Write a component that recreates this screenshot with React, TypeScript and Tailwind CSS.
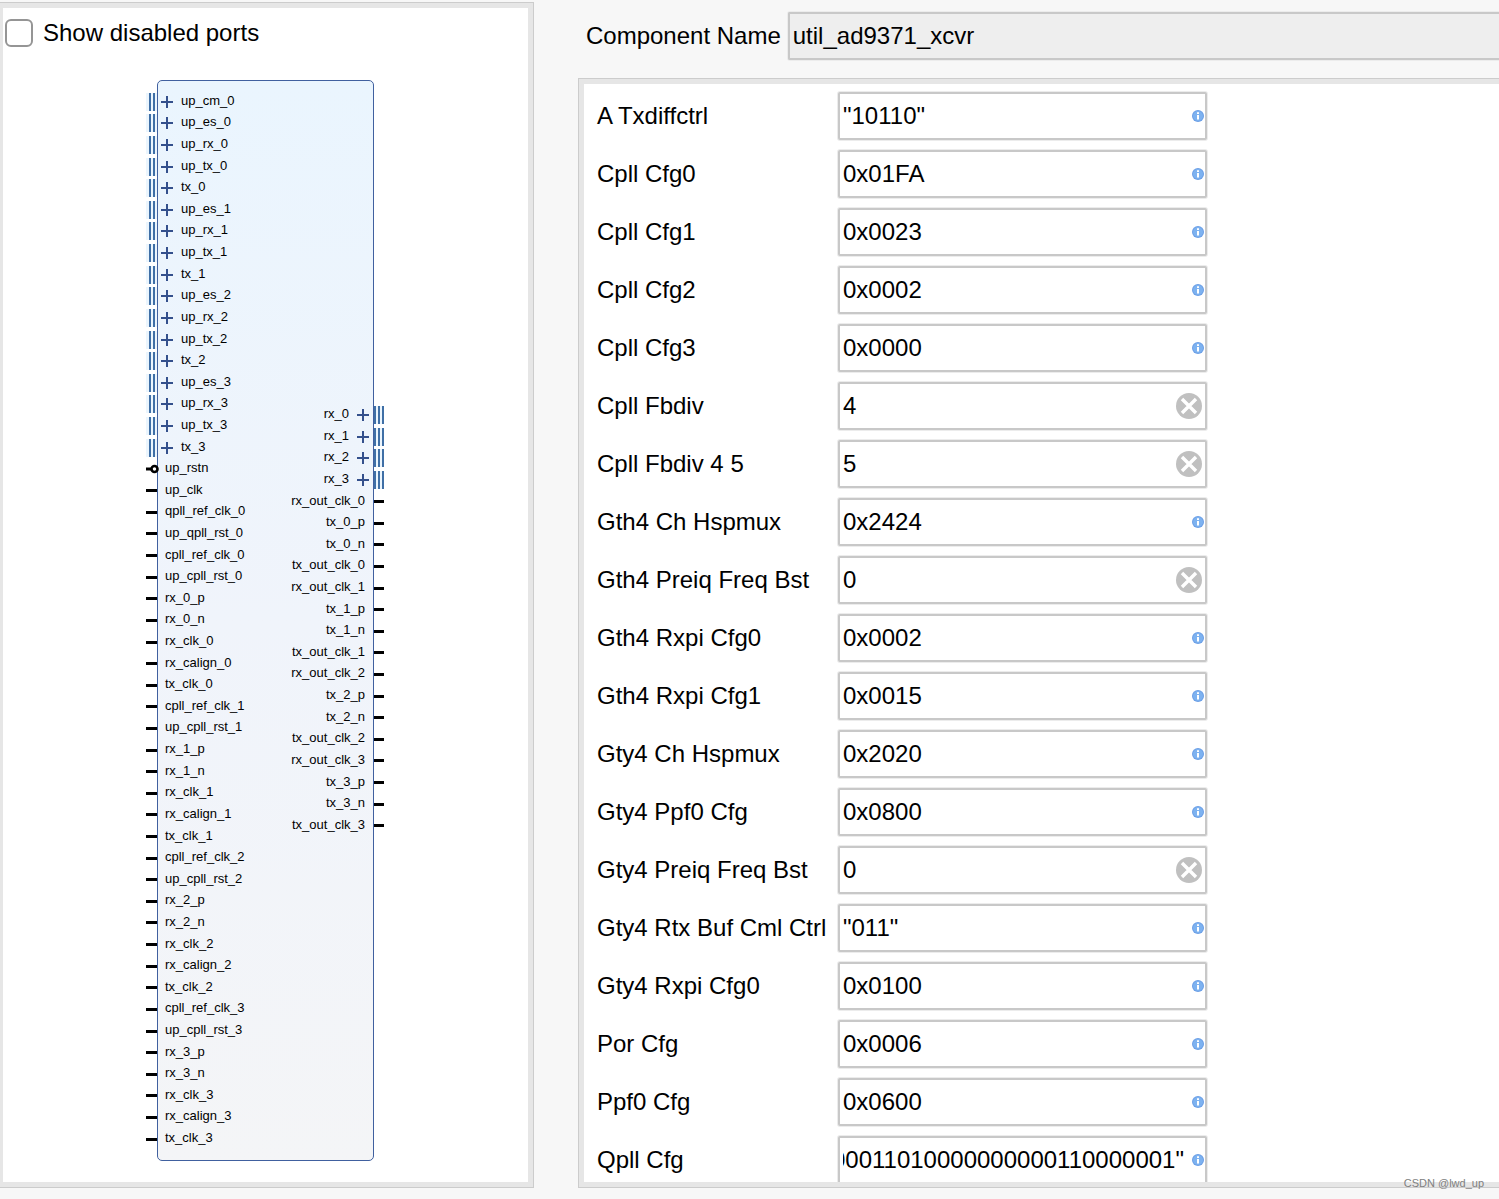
import { useEffect, useRef } from "react";

const busLeft = [
  "up_cm_0", "up_es_0", "up_rx_0", "up_tx_0", "tx_0",
  "up_es_1", "up_rx_1", "up_tx_1", "tx_1",
  "up_es_2", "up_rx_2", "up_tx_2", "tx_2",
  "up_es_3", "up_rx_3", "up_tx_3", "tx_3",
];

const pinLeft = [
  "up_rstn", "up_clk", "qpll_ref_clk_0", "up_qpll_rst_0",
  "cpll_ref_clk_0", "up_cpll_rst_0", "rx_0_p", "rx_0_n", "rx_clk_0", "rx_calign_0", "tx_clk_0",
  "cpll_ref_clk_1", "up_cpll_rst_1", "rx_1_p", "rx_1_n", "rx_clk_1", "rx_calign_1", "tx_clk_1",
  "cpll_ref_clk_2", "up_cpll_rst_2", "rx_2_p", "rx_2_n", "rx_clk_2", "rx_calign_2", "tx_clk_2",
  "cpll_ref_clk_3", "up_cpll_rst_3", "rx_3_p", "rx_3_n", "rx_clk_3", "rx_calign_3", "tx_clk_3",
];

const busRight = ["rx_0", "rx_1", "rx_2", "rx_3"];

const pinRight = [
  "rx_out_clk_0", "tx_0_p", "tx_0_n", "tx_out_clk_0",
  "rx_out_clk_1", "tx_1_p", "tx_1_n", "tx_out_clk_1",
  "rx_out_clk_2", "tx_2_p", "tx_2_n", "tx_out_clk_2",
  "rx_out_clk_3", "tx_3_p", "tx_3_n", "tx_out_clk_3",
];

type Param = { label: string; value: string; clear?: boolean };

const params: Param[] = [
  { label: "A Txdiffctrl", value: '"10110"' },
  { label: "Cpll Cfg0", value: "0x01FA" },
  { label: "Cpll Cfg1", value: "0x0023" },
  { label: "Cpll Cfg2", value: "0x0002" },
  { label: "Cpll Cfg3", value: "0x0000" },
  { label: "Cpll Fbdiv", value: "4", clear: true },
  { label: "Cpll Fbdiv 4 5", value: "5", clear: true },
  { label: "Gth4 Ch Hspmux", value: "0x2424" },
  { label: "Gth4 Preiq Freq Bst", value: "0", clear: true },
  { label: "Gth4 Rxpi Cfg0", value: "0x0002" },
  { label: "Gth4 Rxpi Cfg1", value: "0x0015" },
  { label: "Gty4 Ch Hspmux", value: "0x2020" },
  { label: "Gty4 Ppf0 Cfg", value: "0x0800" },
  { label: "Gty4 Preiq Freq Bst", value: "0", clear: true },
  { label: "Gty4 Rtx Buf Cml Ctrl", value: '"011"' },
  { label: "Gty4 Rxpi Cfg0", value: "0x0100" },
  { label: "Por Cfg", value: "0x0006" },
  { label: "Ppf0 Cfg", value: "0x0600" },
  { label: "Qpll Cfg", value: '"000000000011010000000000110000001"' },
];

function Plus() {
  return (
    <svg className="size-3 shrink-0" viewBox="0 0 12 12" aria-hidden="true">
      <path d="M0 6H12M6 0V12" stroke="#34508c" strokeWidth="2" />
    </svg>
  );
}

function BusPinLeft() {
  return (
    <svg className="h-[18px] w-[11px]" viewBox="0 0 11 18" aria-hidden="true">
      <rect width="11" height="18" fill="#ebf5fd" />
      <path d="M4 0V18M8 0V18" stroke="#3f6fa6" strokeWidth="2" />
    </svg>
  );
}

function BusPinRight() {
  return (
    <svg className="h-[18px] w-[10px]" viewBox="0 0 10 18" aria-hidden="true">
      <rect width="10" height="18" fill="#ebf5fd" />
      <path d="M1 0V18M5 0V18M9 0V18" stroke="#3f6fa6" strokeWidth="2" />
    </svg>
  );
}

function InvertedPin() {
  return (
    <svg className="h-[10px] w-[11px] overflow-visible" viewBox="0 0 11 10" aria-hidden="true">
      <path d="M0 5H5" stroke="#000" strokeWidth="3" />
      <circle cx="8.5" cy="5" r="3" fill="#fff" stroke="#000" strokeWidth="2.6" />
    </svg>
  );
}

function BlockSymbol() {
  return (
    <div className="flex flex-1 justify-center pr-px text-[13px] leading-4 text-black">
      <div className="relative z-10 flex w-[11px] flex-col py-[11px]">
        {busLeft.map((n) => (
          <div key={n} className="flex flex-1 items-center"><BusPinLeft /></div>
        ))}
        {pinLeft.map((n) => (
          <div key={n} className="flex flex-1 items-center">
            {n === "up_rstn" ? <InvertedPin /> : <div className="h-[3px] w-full bg-black" />}
          </div>
        ))}
      </div>
      <div className="flex w-[217px] justify-between rounded-[5px] border border-[#40609f] bg-linear-to-b from-[#eaf5fe] via-[#f0f4fb] to-[#f4f5f7] py-[10px]">
        <ul className="flex flex-col">
          {busLeft.map((n) => (
            <li key={n} className="flex flex-1 items-center gap-2 pl-[3px]">
              <Plus />
              <span className="-mt-0.5">{n}</span>
            </li>
          ))}
          {pinLeft.map((n) => (
            <li key={n} className="flex flex-1 items-center pl-[7px]">
              <span className="-mt-0.5">{n}</span>
            </li>
          ))}
        </ul>
        <ul className="flex flex-col">
          <li className="flex-[29]" aria-hidden="true" />
          {busRight.map((n) => (
            <li key={n} className="flex flex-[2] items-center justify-end gap-2 pr-1">
              <span className="-mt-0.5">{n}</span>
              <Plus />
            </li>
          ))}
          {pinRight.map((n) => (
            <li key={n} className="flex flex-[2] items-center justify-end pr-2">
              <span className="-mt-0.5">{n}</span>
            </li>
          ))}
          <li className="flex-[29]" aria-hidden="true" />
        </ul>
      </div>
      <div className="flex w-[10px] flex-col py-[11px]">
        <div className="flex-[29]" />
        {busRight.map((n) => (
          <div key={n} className="flex flex-[2] items-center"><BusPinRight /></div>
        ))}
        {pinRight.map((n) => (
          <div key={n} className="flex flex-[2] items-center"><div className="h-[3px] w-full bg-black" /></div>
        ))}
        <div className="flex-[29]" />
      </div>
    </div>
  );
}

function InfoIcon() {
  return (
    <svg className="size-3 shrink-0" viewBox="0 0 12 12" aria-hidden="true">
      <circle cx="6" cy="6" r="6" fill="#6b9fe6" />
      <circle cx="6" cy="6" r="5" fill="#7db2f0" />
      <path d="M5 5H7V9.5H5Z M5 2.3H7V4H5Z" fill="#fff" />
    </svg>
  );
}

function ClearIcon() {
  return (
    <svg className="size-[26px]" viewBox="0 0 26 26" aria-hidden="true">
      <circle cx="13" cy="13" r="13" fill="#c0c0c0" />
      <path d="M6 6L20 20M20 6L6 20" stroke="#fff" strokeWidth="3.4" />
    </svg>
  );
}

function ParamRow({ label, value, clear }: Param) {
  const ref = useRef<HTMLInputElement>(null);
  const id = label.toLowerCase().replace(/ /g, "-");

  useEffect(() => {
    if (ref.current) ref.current.scrollLeft = ref.current.scrollWidth;
  }, []);

  return (
    <div className="flex items-center">
      <label htmlFor={id} className="w-60 shrink-0 whitespace-nowrap">{label}</label>
      <div className="m-px flex h-12 w-[369px] items-center rounded-[2px] border-2 border-[#c8c8c8] bg-white pl-[3px] ring-1 ring-[#ececec]">
        <input ref={ref} id={id} defaultValue={value} className="min-w-0 flex-1 bg-transparent outline-none" />
        {clear ? (
          <button type="button" aria-label={`Clear ${label}`} className="mr-[3px] ml-2"><ClearIcon /></button>
        ) : (
          <span className="mr-[1px] ml-2"><InfoIcon /></span>
        )}
      </div>
    </div>
  );
}

export default function App() {
  return (
    <div className="relative grid h-screen grid-cols-[534fr_965fr] gap-0 overflow-hidden bg-[#f7f7f7] pt-[2px] pb-[11px] font-['Liberation_Sans',Arial,sans-serif] text-2xl leading-7 text-black">
      <section className="flex min-w-0 border-y border-r border-[#cccccc]">
        <div className="flex flex-1 flex-col border-y-[5px] border-r-[5px] border-l-[3px] border-[#e6e6e6] bg-white pb-[21px]">
          <label className="mt-[11px] mb-[33px] flex items-center gap-[10px] pl-[2px]">
            <input type="checkbox" className="size-7 appearance-none rounded-[6px] border-2 border-[#959595] bg-white checked:bg-[#959595]" />
            Show disabled ports
          </label>
          <BlockSymbol />
        </div>
      </section>

      <main className="flex min-h-0 min-w-0 flex-col pl-11">
        <div className="mt-[9px] mb-[17px] flex items-center gap-[6px] pl-2">
          <label htmlFor="component-name" className="whitespace-nowrap">Component Name</label>
          <input
            id="component-name"
            defaultValue="util_ad9371_xcvr"
            className="my-px ml-px h-12 min-w-0 flex-1 rounded-l-[2px] border-2 border-r-0 border-[#c8c8c8] bg-[#eeeeee] pl-[3px] ring-1 ring-[#ececec] outline-none"
          />
        </div>
        <div className="flex min-h-0 flex-1 border-y border-l border-[#cccccc]">
          <div className="flex flex-1 flex-col gap-2 overflow-hidden border-y-[5px] border-l-[5px] border-[#e6e6e6] bg-white pt-[7px] pl-[13px]">
            {params.map((p) => (
              <ParamRow key={p.label} {...p} />
            ))}
          </div>
        </div>
      </main>

      <span className="absolute right-[15px] bottom-2 text-[11px] leading-4 text-[#808080]">CSDN @lwd_up</span>
    </div>
  );
}
